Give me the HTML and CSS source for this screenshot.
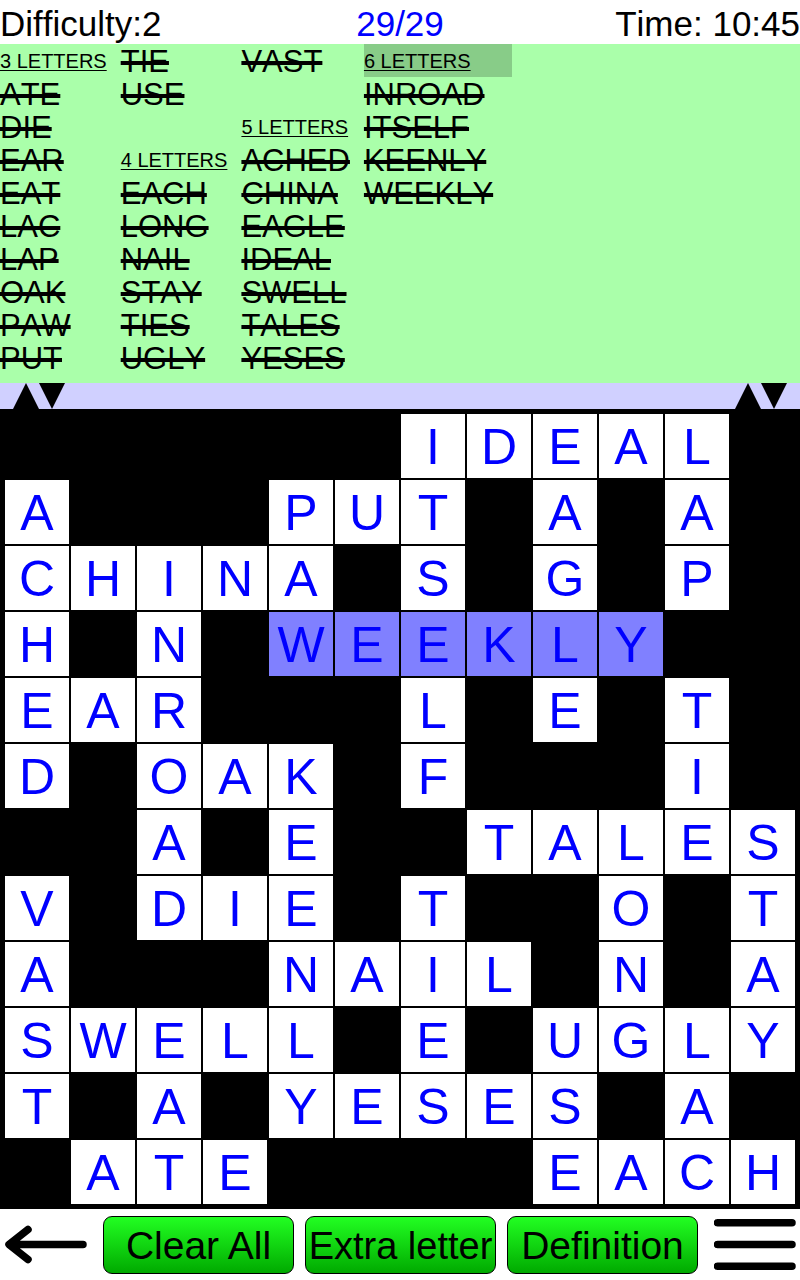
FILE: index.html
```html
<!doctype html>
<html lang="en">

<head>
    <meta charset="utf-8">
    <meta name="viewport" content="width=device-width, initial-scale=1.0">
    <title>Fill-In Crossword</title>
    <link rel="stylesheet" href="styles.css">
</head>

<body>
    <header class="status">
        <span>Difficulty:2</span>
        <span class="progress">29/29</span>
        <span class="time">Time: 10:45</span>
    </header>

    <!-- Word list, filled in by script.js -->
    <div class="words" id="words"></div>

    <div class="scroll-bar">
        <div class="arrows">
            <button class="arrow" aria-label="Smaller list"><svg viewBox="0 0 26 26"><path d="M13 0L26 26H0z"/></svg></button>
            <button class="arrow" aria-label="Larger list"><svg viewBox="0 0 26 26"><path d="M0 0H26L13 26z"/></svg></button>
        </div>
        <div class="arrows">
            <button class="arrow" aria-label="Smaller list"><svg viewBox="0 0 26 26"><path d="M13 0L26 26H0z"/></svg></button>
            <button class="arrow" aria-label="Larger list"><svg viewBox="0 0 26 26"><path d="M0 0H26L13 26z"/></svg></button>
        </div>
    </div>

    <!-- Puzzle grid, filled in by script.js -->
    <main class="board" id="board"></main>

    <footer class="toolbar">
        <button class="icon-button" aria-label="Back">
            <svg viewBox="0 0 83 58"><path d="M79 28.500H9M24 13.500L5 28.500L24 43.500" fill="none" stroke="#000" stroke-width="7.500" stroke-linecap="round" stroke-linejoin="round"/><path d="M2 28.500L14 20V37z"/></svg>
        </button>
        <div class="actions">
            <button class="action">Clear All</button>
            <button class="action long">Extra letter</button>
            <button class="action">Definition</button>
        </div>
        <button class="icon-button" aria-label="Menu">
            <svg viewBox="0 0 83 58"><path d="M3.500 6.700H78M3.500 28.500H78M3.500 50.300H78" fill="none" stroke="#000" stroke-width="7.500" stroke-linecap="round"/></svg>
        </button>
    </footer>

    <script src="script.js"></script>
</body>

</html>
```
FILE: styles.css
```css
* {
    box-sizing: border-box;
}

body {
    margin: 0;
    background-color: #fff;
    color: #000;
    font-family: "Liberation Sans", Arial, sans-serif;
    font-kerning: none;
}

button {
    margin: 0;
    padding: 0;
    border: none;
    background: none;
    color: inherit;
    font-family: inherit;
    cursor: pointer;
}

svg {
    display: block;
    width: 100%;
}

/* Top line */
.status {
    display: grid;
    grid-template-columns: 1fr auto 1fr;
    padding-top: 4px;
    font-size: 35px;
    line-height: 40px;
}

.progress {
    color: #00f;
}

.time {
    text-align: right;
}

/* Word list */
.words {
    display: flex;
    padding-bottom: 9px;
    background-color: #afa;
    line-height: 33px;
}

.column {
    display: flex;
    flex-direction: column;
}

.entry {
    height: 33px;
    padding-top: 1px;
    padding-right: 14px;
    font-size: 31px;
    text-decoration: line-through 4px;
    white-space: nowrap;
}

.entry.heading {
    font-size: 20px;
    text-decoration: underline 1px;
    text-underline-offset: 2px;
}

.entry.current {
    min-width: 148px;
    background-color: #8c8;
}

/* Bar between the list and the grid */
.scroll-bar {
    display: flex;
    justify-content: space-between;
    padding: 0 13px;
    background-color: #d0d0ff;
}

.arrows {
    display: flex;
}

.arrow {
    width: 26px;
    height: 26px;
}

/* Grid */
.board {
    display: grid;
    grid-template-columns: repeat(12, 1fr);
    gap: 2px;
    padding: 5px;
    background-color: #000;
}

.cell {
    display: flex;
    align-items: center;
    justify-content: center;
    min-width: 0;
    padding-top: 2px;
    aspect-ratio: 1;
    color: #00f;
    font-size: 50px;
    line-height: 1;
}

.cell.letter {
    background-color: #fff;
}

.cell.selected {
    background-color: #8080ff;
}

/* Bottom buttons */
.toolbar {
    display: flex;
    align-items: center;
    gap: 16px;
    padding: 7px 3px 6px 4px;
}

.icon-button {
    flex: 0 0 83px;
}

.actions {
    flex: 1;
    display: flex;
    gap: 11px;
}

.action {
    flex: 1 1 0;
    height: 58px;
    padding-top: 2px;
    border: 1px solid #000;
    border-radius: 9px;
    background: linear-gradient(#2f2, #0a0);
    font-size: 39px;
    white-space: nowrap;
}

.action.long {
    font-size: 38px;
}
```
FILE: script.js
```js
// Each column of the list, an empty string leaves a blank line
const columns = [
    ["3 LETTERS", "ATE", "DIE", "EAR", "EAT", "LAC", "LAP", "OAK", "PAW", "PUT"],
    ["TIE", "USE", "", "4 LETTERS", "EACH", "LONG", "NAIL", "STAY", "TIES", "UGLY"],
    ["VAST", "", "5 LETTERS", "ACHED", "CHINA", "EAGLE", "IDEAL", "SWELL", "TALES", "YESES"],
    ["6 LETTERS", "INROAD", "ITSELF", "KEENLY", "WEEKLY"]
];
const currentHeading = "6 LETTERS";

// A dot is a black square
const rows = [
    "......IDEAL.",
    "A...PUT.A.A.",
    "CHINA.S.G.P.",
    "H.N.WEEKLY..",
    "EAR...L.E.T.",
    "D.OAK.F...I.",
    "..A.E..TALES",
    "V.DIE.T..O.T",
    "A...NAIL.N.A",
    "SWELL.E.UGLY",
    "T.A.YESES.A.",
    ".ATE....EACH"
];
const selected = { row: 3, from: 4, to: 9 };

const words = document.getElementById("words");
columns.forEach(list => {
    const column = document.createElement("div");
    column.className = "column";
    list.forEach(text => {
        const entry = document.createElement("div");
        entry.className = "entry";
        if (text.includes("LETTERS")) entry.classList.add("heading");
        if (text === currentHeading) entry.classList.add("current");
        entry.textContent = text;
        column.appendChild(entry);
    });
    words.appendChild(column);
});

const board = document.getElementById("board");
rows.forEach((line, r) => {
    [...line].forEach((letter, c) => {
        const cell = document.createElement("div");
        cell.className = "cell";
        if (letter !== ".") {
            cell.classList.add("letter");
            cell.textContent = letter;
        }
        if (r === selected.row && c >= selected.from && c <= selected.to) {
            cell.classList.add("selected");
        }
        board.appendChild(cell);
    });
});
```
